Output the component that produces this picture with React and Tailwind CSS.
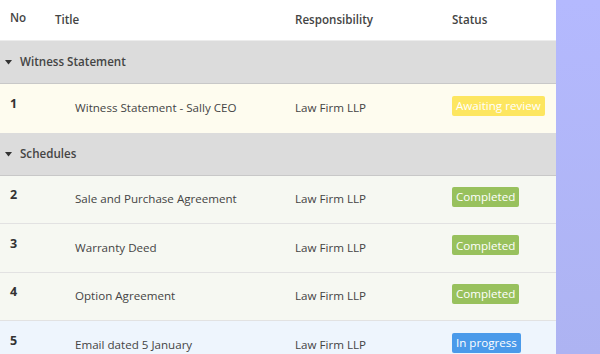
import React from 'react';

const groups = [
  {
    name: 'Witness Statement',
    rows: [
      { no: 1, title: 'Witness Statement - Sally CEO', who: 'Law Firm LLP', status: 'Awaiting review', bg: 'bg-[#fefcef]' },
    ],
  },
  {
    name: 'Schedules',
    rows: [
      { no: 2, title: 'Sale and Purchase Agreement', who: 'Law Firm LLP', status: 'Completed', bg: 'bg-[#f6f8f2]' },
      { no: 3, title: 'Warranty Deed', who: 'Law Firm LLP', status: 'Completed', bg: 'bg-[#f6f8f2]' },
      { no: 4, title: 'Option Agreement', who: 'Law Firm LLP', status: 'Completed', bg: 'bg-[#f6f8f2]' },
      { no: 5, title: 'Email dated 5 January', who: 'Law Firm LLP', status: 'In progress', bg: 'bg-[#eef5fd]' },
    ],
  },
];

const badgeColors = {
  'Awaiting review': 'bg-[#fde660]',
  Completed: 'bg-[#98c15d]',
  'In progress': 'bg-[#4a9aea]',
};

const cols = 'grid grid-cols-[45px_240px_157px_1fr] items-center pl-[10px]';

function Badge({ status }) {
  return (
    <span className={`inline-flex h-[20px] items-center rounded-[2px] px-[4px] text-[11.6px] text-white ${badgeColors[status]}`}>
      {status}
    </span>
  );
}

export default function App() {
  return (
    <div className="flex h-[354px] w-[600px] overflow-hidden font-['Open_Sans',sans-serif] text-[#444]">
      <div className="w-[556px] shrink-0 bg-white">
        {/* header */}
        <div className={`${cols} h-[41px] border-b border-[#ececec] text-[11.6px] font-semibold`}>
          <div className="-mt-[5px]">No</div>
          <div>Title</div>
          <div>Responsibility</div>
          <div>Status</div>
        </div>

        {groups.map((g) => (
          <div key={g.name}>
            <div className="flex h-[43px] items-center gap-[8px] border-b border-[#c8c8c8] bg-[#dcdcdc] pl-[5px] text-[11.6px] font-semibold">
              <svg width="7" height="5" viewBox="0 0 7 5" className="mt-[1px]">
                <path d="M0 0h7L3.5 4.5z" fill="#333" />
              </svg>
              <span>{g.name}</span>
            </div>
            {g.rows.map((r, i) => (
              <div
                key={r.no}
                className={`${cols} h-[48.5px] text-[11.6px] ${r.bg} ${i < g.rows.length - 1 ? 'border-b border-[#e2e2e2]' : ''}`}
              >
                <div className="-mt-[7px] text-[12.5px] font-bold text-[#333]">{r.no}</div>
                <div className="-mt-[1px] pl-[20px]">{r.title}</div>
                <div className="-mt-[1px]">{r.who}</div>
                <div className="-mt-[5px]"><Badge status={r.status} /></div>
              </div>
            ))}
          </div>
        ))}
      </div>
      <div className="flex-1 bg-gradient-to-b from-[#b4b9fe] to-[#adb3f2]" />
    </div>
  );
}
